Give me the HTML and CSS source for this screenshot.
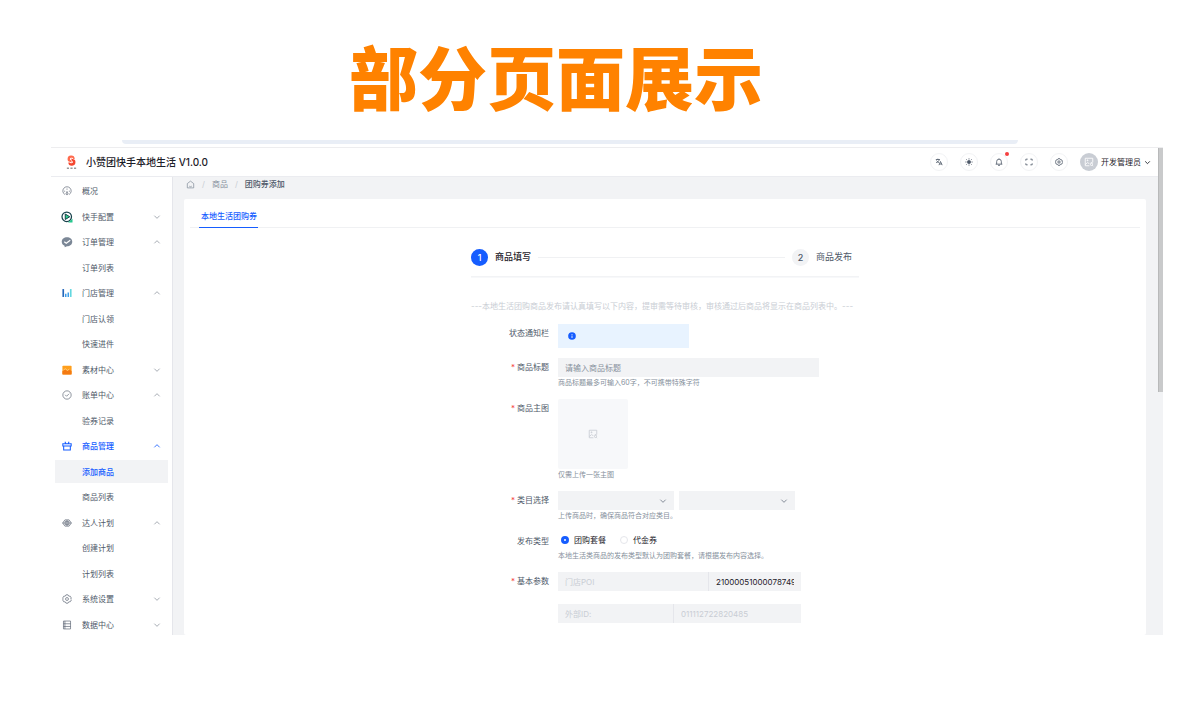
FILE: index.html
```html
<!DOCTYPE html>
<html lang="zh-CN">
<head>
	<meta charset="UTF-8">
	<meta name="viewport" content="width=device-width, initial-scale=1">
	<title>小赞团快手本地生活</title>
	<link rel="stylesheet" href="styles.css">
</head>
<body>
	<svg class="sprite" aria-hidden="true">
		<symbol id="down" viewBox="0 0 48 48"><path d="M40 16 24 32 8 16"/></symbol>
		<symbol id="up" viewBox="0 0 48 48"><path d="M40 32 24 16 8 32"/></symbol>
		<symbol id="image" viewBox="0 0 48 48">
			<path d="M42 26V6H6v36h20M6 36l11-9 8 5M15 14h4v4h-4z"/>
			<circle cx="36" cy="36" r="5"/><path d="m40 40 4 4M29 32l6-6 8 4"/>
		</symbol>
		<symbol id="setting" viewBox="0 0 48 48">
			<path d="M19 4h10l3 6 8 1 5 9-4 4 4 4-5 9-8 1-3 6H19l-3-6-8-1-5-9 4-4-4-4 5-9 8-1z"/>
			<circle cx="24" cy="24" r="7"/>
		</symbol>
	</svg>

	<h1 class="page-title">部分页面展示</h1>

	<div class="address-bar"></div>
	<div class="window">
		<div class="app">
			<header class="header">
				<svg class="logo" viewBox="0 0 30 42">
					<path d="M24 11A10 10 0 0 0 4 12c0 7 6 7 12 9l-2-6c-5-1-4-7 1-7 3 0 4 1 5 3z" fill="#ff6a4d"/>
					<path d="M6 21a10 10 0 0 0 20-2c0-7-6-7-12-9l2 7c5 1 4 6-1 6-3 0-4-1-5-2z" fill="#f4472f"/>
					<path d="M2 35h6v4H2zM12 35h6v4h-6zM22 35h6v4h-6z" fill="#999"/>
				</svg>
				<strong class="app-name">小赞团快手本地生活 V1.0.0</strong>
				<div class="tools">
					<button class="tool" aria-label="语言">
						<svg class="icon" viewBox="0 0 48 48"><path d="M5 9h24M17 4v5M9 15c3 6 9 10 16 13M26 9c-2 9-9 16-19 19M24 43l9-22 10 22M28 36h12"/></svg>
					</button>
					<button class="tool" aria-label="主题">
						<svg class="icon" viewBox="0 0 48 48"><circle cx="24" cy="24" r="9" fill="currentColor"/><path d="M24 2v7M24 39v7M2 24h7M39 24h7M8 8l5 5M35 35l5 5M40 8l-5 5M13 35l-5 5"/></svg>
					</button>
					<button class="tool" aria-label="消息">
						<svg class="icon" viewBox="0 0 48 48"><path d="M4 37h40M10 37V21a14 14 0 0 1 28 0v16M24 7V3M18 44h12"/></svg>
						<span class="dot"></span>
					</button>
					<button class="tool" aria-label="全屏">
						<svg class="icon" viewBox="0 0 48 48"><path d="M5 16V7h11M32 7h11v9M43 32v9H32M16 41H5v-9"/></svg>
					</button>
					<button class="tool" aria-label="设置">
						<svg class="icon"><use href="#setting"/></svg>
					</button>
					<button class="user">
						<span class="avatar"><svg class="icon"><use href="#image"/></svg></span>
						开发管理员
						<svg class="arrow"><use href="#down"/></svg>
					</button>
				</div>
			</header>

			<div class="body">
				<nav class="sidebar">
					<ul class="menu">
						<li><a href="#">
							<svg class="icon" viewBox="0 0 48 48"><path d="M14 41a20 20 0 1 1 20 0M24 12v6M10 25h5M33 25h5M24 24v10"/><circle cx="24" cy="37" r="5"/></svg>概况</a></li>
						<li><button>
							<svg class="icon icon-big" viewBox="0 0 48 48"><circle cx="23" cy="23" r="19" fill="#fff" stroke="#17414b" stroke-width="5"/><path d="M28 46h18V31z" fill="#25c78d" stroke="none"/><path d="M17 12v22l18-11z" fill="#2fd08c" stroke="#17414b" stroke-width="4"/></svg>快手配置
							<svg class="arrow"><use href="#down"/></svg></button></li>
						<li><button>
							<svg class="icon icon-big" viewBox="0 0 48 48"><path d="M24 5c12 0 21 7 21 18S36 41 24 41l-9 4-1-6C7 36 3 30 3 23 3 12 12 5 24 5z" fill="#7b8796" stroke="none"/><path d="m13 23 8 6 16-12" stroke="#fff" stroke-width="5"/></svg>订单管理
							<svg class="arrow"><use href="#up"/></svg></button></li>
						<li><a class="sub" href="#">订单列表</a></li>
						<li><button>
							<svg class="icon" viewBox="0 0 48 48"><path d="M6 5v38" stroke="#2467ba" stroke-width="8"/><path d="M18 27v16M30 22v21" stroke="#3a9ce9" stroke-width="7"/><path d="M42 5v38" stroke="#62d7df" stroke-width="8"/></svg>门店管理
							<svg class="arrow"><use href="#up"/></svg></button></li>
						<li><a class="sub" href="#">门店认领</a></li>
						<li><a class="sub" href="#">快速进件</a></li>
						<li><button>
							<svg class="icon" viewBox="0 0 48 48"><rect x="2" y="3" width="44" height="42" rx="4" fill="#ff9f1c" stroke="none"/><path d="m2 30 13-8 11 7 9-6 11 6v16H2z" fill="#f47a12" stroke="none"/><path d="m7 24 9-6 10 8 9-6" stroke="#ffe0a8" stroke-width="3"/></svg>素材中心
							<svg class="arrow"><use href="#down"/></svg></button></li>
						<li><button>
							<svg class="icon" viewBox="0 0 48 48"><circle cx="24" cy="24" r="20"/><path d="m15 23 7 7 12-12"/></svg>账单中心
							<svg class="arrow"><use href="#up"/></svg></button></li>
						<li><a class="sub" href="#">验券记录</a></li>
						<li><button class="active">
							<svg class="icon" viewBox="0 0 48 48"><path d="M4 13h40v11H4zM8 24v19h32V24M14 4l5 9M34 4l-5 9"/></svg>商品管理
							<svg class="arrow"><use href="#up"/></svg></button></li>
						<li><a class="sub active current" href="#">添加商品</a></li>
						<li><a class="sub" href="#">商品列表</a></li>
						<li><button>
							<svg class="icon" viewBox="0 0 48 48"><path d="M14 9 3 24l11 15h20l11-15L34 9zM3 24h42M24 9v30M15 16h18v16H15z"/></svg>达人计划
							<svg class="arrow"><use href="#up"/></svg></button></li>
						<li><a class="sub" href="#">创建计划</a></li>
						<li><a class="sub" href="#">计划列表</a></li>
						<li><button>
							<svg class="icon"><use href="#setting"/></svg>系统设置
							<svg class="arrow"><use href="#down"/></svg></button></li>
						<li><button>
							<svg class="icon" viewBox="0 0 48 48"><path d="M7 5h34v38H7zM7 18h34M7 31h34M14 5v38"/></svg>数据中心
							<svg class="arrow"><use href="#down"/></svg></button></li>
					</ul>
				</nav>

				<main class="content">
					<div class="breadcrumb">
						<svg class="icon" viewBox="0 0 48 48"><path d="M7 19 24 6l17 13v23H7zM17 32c4 5 10 5 14 0"/></svg>
						<i>/</i><a href="#">商品</a><i>/</i><b>团购券添加</b>
					</div>
					<section class="card">
						<div class="tabs"><a class="tab" href="#">本地生活团购券</a></div>
						<form class="form">
							<div class="steps">
								<span class="step-num step-num-on">1</span><b>商品填写</b>
								<span class="step-line"></span>
								<span class="step-num">2</span><span class="step-text">商品发布</span>
							</div>
							<p class="notice">---本地生活团购商品发布请认真填写以下内容，提审需等待审核，审核通过后商品将显示在商品列表中。---</p>

							<div class="form-row">
								<span class="label">状态通知栏</span>
								<div class="field">
									<div class="alert">
										<svg class="icon" viewBox="0 0 48 48"><circle cx="24" cy="24" r="23" fill="#165dff" stroke="none"/><path d="M24 12v5M24 21v15" stroke="#fff" stroke-width="5"/></svg>
									</div>
								</div>
							</div>
							<div class="form-row">
								<label class="label required" for="title">商品标题</label>
								<div class="field">
									<input id="title" class="input" type="text" placeholder="请输入商品标题">
									<p class="hint">商品标题最多可输入60字，不可携带特殊字符</p>
								</div>
							</div>
							<div class="form-row">
								<label class="label required" for="upload">商品主图</label>
								<div class="field">
									<button id="upload" class="upload" type="button" aria-label="上传"><svg class="icon"><use href="#image"/></svg></button>
									<p class="hint">仅需上传一张主图</p>
								</div>
							</div>
							<div class="form-row">
								<label class="label required" for="category">类目选择</label>
								<div class="field">
									<div class="selects">
										<span class="select"><select id="category"><option></option></select><svg class="arrow"><use href="#down"/></svg></span>
										<span class="select"><select aria-label="二级类目"><option></option></select><svg class="arrow"><use href="#down"/></svg></span>
									</div>
									<p class="hint">上传商品时，确保商品符合对应类目。</p>
								</div>
							</div>
							<div class="form-row">
								<span class="label">发布类型</span>
								<div class="field">
									<div class="radios">
										<label><input type="radio" name="type" checked>团购套餐</label>
										<label><input type="radio" name="type">代金券</label>
									</div>
									<p class="hint">本地生活类商品的发布类型默认为团购套餐，请根据发布内容选择。</p>
								</div>
							</div>
							<div class="form-row">
								<label class="label required" for="poi">基本参数</label>
								<div class="field">
									<div class="pair">
										<input id="poi" class="input" type="text" placeholder="门店POI" disabled>
										<input class="input" type="text" value="210000510000787495" aria-label="门店POI值">
									</div>
									<div class="pair pair-even">
										<input class="input" type="text" placeholder="外部ID:" aria-label="外部ID" disabled>
										<input class="input" type="text" placeholder="011112722820485" aria-label="外部ID值" disabled>
									</div>
								</div>
							</div>
						</form>
					</section>
				</main>
			</div>
		</div>
		<div class="scrollbar"><div class="thumb"></div></div>
	</div>
</body>
</html>
```
FILE: styles.css
```css
* {
	margin: 0;
	padding: 0;
	box-sizing: border-box;
}
body {
	background: #fff;
	color: #4e5969;
	font: 8px/12px Inter, "Noto Sans CJK SC", sans-serif;
	font-variant-ligatures: none;
}
button, input, select {
	border: 0;
	background: none;
	color: inherit;
	font: inherit;
}
a {
	color: inherit;
	text-decoration: none;
}
svg {
	flex: none;
	fill: none;
	stroke: currentColor;
	stroke-width: 4;
}
.sprite {
	display: none;
}
.icon {
	width: 10px;
	height: 10px;
}
.arrow {
	width: 8px;
	height: 8px;
}

.page-title {
	padding: 40px 88px 20px 0;
	color: #ff8200;
	font-size: 69px;
	font-weight: 900;
	line-height: 80px;
	text-align: center;
}
.address-bar {
	height: 4px;
	margin: 0 182px 3px 122px;
	background: #e9eef6;
	border-radius: 0 0 8px 8px;
}
.window {
	display: flex;
	margin: 0 37px 0 51px;
	border-top: 1px solid #ededef;
}
.app {
	flex: 1;
	min-width: 0;
}
.scrollbar {
	width: 5px;
	background: #f2f3f5;
}
.thumb {
	height: 50%;
	background: #c9cacb;
	border-left: 1px solid #b8b9ba;
}

/* header */
.header {
	display: flex;
	align-items: center;
	height: 29px;
	padding: 0 7px 0 15px;
	border-bottom: 1px solid #ebecf0;
}
.logo {
	width: 11px;
	height: 15px;
	margin-right: 9px;
	stroke: none;
}
.app-name {
	color: #1d2129;
	font-size: 10px;
	font-weight: 500;
}
.tools {
	display: flex;
	align-items: center;
	gap: 12px;
	margin-left: auto;
}
.tool {
	position: relative;
	display: flex;
	align-items: center;
	justify-content: center;
	width: 18px;
	height: 18px;
	border: 1px solid #f2f3f5;
	border-radius: 50%;
}
.tool .icon {
	width: 8px;
	height: 8px;
	stroke-width: 5;
}
.dot {
	position: absolute;
	top: -2px;
	right: -2px;
	width: 4px;
	height: 4px;
	border-radius: 50%;
	background: #f53f3f;
}
.user {
	display: flex;
	align-items: center;
	gap: 3px;
	color: #1d2129;
}
.avatar {
	display: flex;
	align-items: center;
	justify-content: center;
	width: 18px;
	height: 18px;
	border-radius: 50%;
	background: #c9cdd4;
	color: #fff;
}
.user .arrow {
	width: 7px;
	height: 7px;
	stroke-width: 6;
}

/* sidebar */
.body {
	display: flex;
}
.sidebar {
	width: 122px;
	padding: 1px 4px 0;
	border-right: 1px solid #e5e6eb;
}
.menu {
	margin-bottom: -2px;
	list-style: none;
}
.menu li {
	display: flex;
	align-items: center;
	height: 25px;
}
.menu li:nth-child(odd) {
	height: 26px;
}
.menu a, .menu button {
	display: flex;
	align-items: center;
	width: 100%;
	height: 23px;
	padding: 0 7px;
	gap: 10px;
	text-align: left;
}
.menu .sub {
	padding-left: 27px;
}
.menu .icon {
	stroke-width: 3;
}
.menu .icon-big {
	width: 12px;
	height: 12px;
	margin: 0 -1px;
}
.menu .arrow {
	margin-left: auto;
	stroke-width: 3;
}
.menu .active {
	color: #165dff;
	font-weight: 500;
}
.menu .active .icon, .menu .active .arrow {
	stroke-width: 5;
}
.menu .current {
	background: #f2f3f5;
}

/* content */
.content {
	display: flex;
	flex: 1;
	flex-direction: column;
	min-width: 0;
	padding: 0 12px 0 11px;
	background: #f2f3f5;
}
.breadcrumb {
	display: flex;
	align-items: center;
	gap: 7px;
	height: 22px;
	padding: 0 0 8px 2px;
	color: #86909c;
}
.breadcrumb .icon {
	width: 9px;
	height: 9px;
}
.breadcrumb i {
	color: #c9cdd4;
	font-style: normal;
}
.breadcrumb b {
	color: #4e5969;
	font-weight: 500;
}
.card {
	flex: 1;
	padding: 6px 6px 0;
	background: #fff;
	border-radius: 2px;
}
.tabs {
	display: flex;
	height: 23px;
	padding-left: 9px;
	border-bottom: 1px solid #f0f1f3;
}
.tab {
	height: 23px;
	padding: 5px 1px 0 2px;
	border-bottom: 1px solid #165dff;
	color: #165dff;
	font-weight: 500;
}

/* form */
.form {
	max-width: 388px;
	margin: 0 auto;
}
.steps {
	display: flex;
	align-items: center;
	height: 49px;
	padding: 10px 7px 0 0;
	border-bottom: 1px solid #f2f3f5;
	box-shadow: 0 1px #f7f8fa;
	font-size: 9px;
}
.steps b {
	color: #1d2129;
	font-weight: 500;
}
.step-num {
	width: 17px;
	height: 17px;
	margin-right: 7px;
	border-radius: 50%;
	background: #f2f3f5;
	font-weight: 500;
	line-height: 17px;
	text-align: center;
}
.step-num-on {
	background: #165dff;
	color: #fff;
}
.step-line {
	flex: 1;
	height: 1px;
	margin: 0 7px;
	background: #f0f1f3;
}
.notice {
	padding: 23px 0 12px;
	color: #c9cdd4;
	white-space: nowrap;
}
.form-row {
	display: grid;
	grid-template-columns: 78px 1fr;
	column-gap: 9px;
	margin-bottom: 10px;
}
.label {
	padding-top: 3px;
	text-align: right;
}
.required::before {
	content: "*";
	margin-right: 2px;
	color: #f53f3f;
}
.alert {
	display: flex;
	align-items: center;
	width: 131px;
	height: 24px;
	padding-left: 10px;
	background: #e8f3ff;
}
.alert .icon {
	width: 8px;
	height: 8px;
}
.input {
	display: block;
	width: 261px;
	height: 19px;
	padding: 0 7px;
	background: #f2f3f5;
	color: #1d2129;
}
.input::placeholder {
	color: #86909c;
}
.input:disabled::placeholder {
	color: #c9cdd4;
}
.hint {
	color: #86909c;
	font-size: 7px;
	white-space: nowrap;
}
.upload {
	display: flex;
	align-items: center;
	justify-content: center;
	width: 70px;
	height: 70px;
	background: #f7f8fa;
	border-radius: 2px;
	color: #c9cdd4;
}
.selects {
	display: flex;
	gap: 5px;
}
.select {
	display: grid;
	align-items: center;
	width: 116px;
	height: 19px;
	background: #f2f3f5;
}
.select select, .select .arrow {
	grid-area: 1 / 1;
}
.select select {
	width: 100%;
	height: 19px;
	appearance: none;
}
.select .arrow {
	justify-self: end;
	margin-right: 7px;
	pointer-events: none;
}
.radios {
	display: flex;
	gap: 14px;
	height: 18px;
	padding: 0 3px 3px;
	color: #1d2129;
}
.radios label {
	display: flex;
	align-items: center;
	gap: 5px;
}
.radios input {
	width: 8px;
	height: 8px;
	border: 1px solid #e5e6eb;
	border-radius: 50%;
	appearance: none;
}
.radios input:checked {
	border: 3px solid #165dff;
}
.pair {
	display: grid;
	grid-template-columns: 150px 92px;
	gap: 1px;
	width: 243px;
	margin-bottom: 13px;
	background: #e5e6eb;
}
.pair-even {
	grid-template-columns: 115px 127px;
	margin-bottom: 0;
}
.pair .input {
	width: 100%;
}
```
